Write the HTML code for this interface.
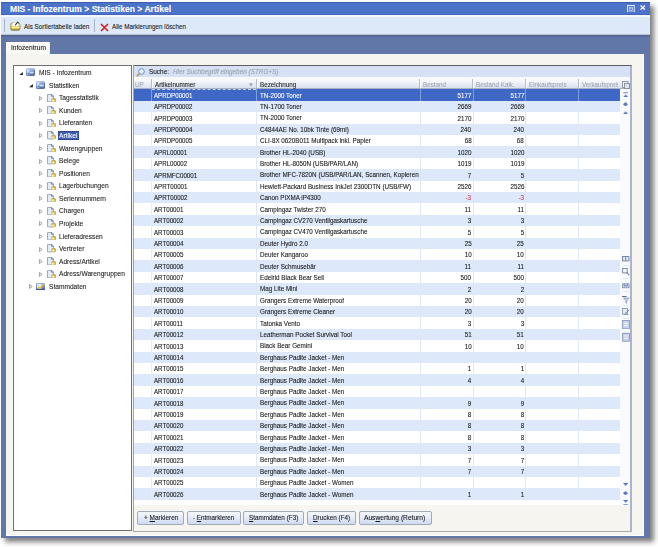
<!DOCTYPE html>
<html><head><meta charset="utf-8"><title>MIS - Infozentrum</title>
<style>
html,body{margin:0;padding:0;}
body{width:658px;height:547px;overflow:hidden;position:relative;background:#ffffff;font-family:"Liberation Sans", sans-serif;}
body div, body svg, .t{position:absolute;}
.t{white-space:nowrap;display:block;-webkit-text-stroke:0.1px currentColor;}
.clip{overflow:hidden;}
.btn{box-sizing:border-box;border:1px solid #a2aab8;border-radius:2px;background:linear-gradient(#f4f7fc 0%,#e6edf9 45%,#cddaf2 100%);font-size:7.8px;line-height:13.6px;color:#1a1a1a;text-align:center;white-space:nowrap;}
.btn span{display:inline-block;-webkit-text-stroke:0.15px currentColor;}
u{text-decoration-thickness:0.7px;text-underline-offset:0.9px;}
</style></head><body>
<div id="root" style="left:0;top:0;width:658px;height:547px;filter:blur(0.35px);">
<div style="left:1.2px;top:1.5px;width:648.80px;height:536.70px;background:#6077a8;box-shadow:4px 4px 5px rgba(0,0,0,0.5);"></div>
<div style="left:1.2px;top:1.5px;width:648.80px;height:13.80px;background:#4b73c9;border-top:1px solid #3b5cae;border-bottom:1px solid #4266b8;box-sizing:border-box;"></div>
<span class="t" style="left:10.20px;top:4.00px;font-size:9.0px;line-height:10px;color:#ffffff;font-weight:bold;font-style:normal;transform:scaleX(0.952);transform-origin:0 50%;">MIS - Infozentrum &gt; Statistiken &gt; Artikel</span>
<svg style="position:absolute;left:627.4px;top:4.5px" width="7.8" height="7.6" viewBox="0 0 7.8 7.6"><rect x="0.5" y="0.5" width="6.8" height="6.6" fill="none" stroke="#e4ecfa" stroke-width="1"/><rect x="2.3" y="2.3" width="3.2" height="3" fill="none" stroke="#c8d6f2" stroke-width="0.8"/><rect x="3.4" y="3.3" width="1" height="1" fill="#ffffff"/></svg>
<svg style="position:absolute;left:639.6px;top:5.4px" width="5.6" height="5.2" viewBox="0 0 5.6 5.2"><path d="M0.5 0.5L5.1 4.7M5.1 0.5L0.5 4.7" stroke="#ffffff" stroke-width="1.3"/></svg>
<div style="left:1.2px;top:15.3px;width:648.80px;height:1.70px;background:#f4f8fe;"></div>
<div style="left:1.2px;top:17.0px;width:648.80px;height:16.50px;background:#dde9f9;"></div>
<div style="left:1.2px;top:33.5px;width:648.80px;height:1.50px;background:#b9bec9;"></div>
<div style="left:1.2px;top:35.0px;width:648.80px;height:1.50px;background:#55699a;"></div>
<div style="left:3.5px;top:18.8px;width:1.00px;height:13.70px;background:#a9b3c4;"></div>
<div style="left:94.0px;top:18.8px;width:1.00px;height:13.20px;background:#a9b3c4;"></div>
<svg style="position:absolute;left:10.2px;top:21.2px" width="10.6" height="10" viewBox="0 0 10.6 10"><defs><linearGradient id="gy" x1="0" y1="0" x2="0" y2="1"><stop offset="0" stop-color="#e2dc90"/><stop offset="0.6" stop-color="#e8c850"/><stop offset="1" stop-color="#8a7a38"/></linearGradient></defs><rect x="0.4" y="1.6" width="9.8" height="8" rx="2.6" fill="url(#gy)" stroke="#8c8450" stroke-width="0.6"/><path d="M2.2 5.2L3 1.6H8.2L8.6 5.2z" fill="#ffffff"/><path d="M5.2 4.4L7.4 1.2L9 2.2" stroke="#3e4a50" stroke-width="1.1" fill="none"/><rect x="2" y="6" width="6.8" height="1.4" fill="#fbef9a"/></svg>
<span class="t" style="left:23.60px;top:21.90px;font-size:7.8px;line-height:10px;color:#161616;font-weight:normal;font-style:normal;transform:scaleX(0.814);transform-origin:0 50%;">Als Sortiertabelle laden</span>
<svg style="position:absolute;left:100px;top:23px" width="9" height="9" viewBox="0 0 9 9"><path d="M1 1L8 8M8 1L1 8" stroke="#d42020" stroke-width="1.6"/></svg>
<span class="t" style="left:112.20px;top:22.00px;font-size:7.8px;line-height:10px;color:#161616;font-weight:normal;font-style:normal;transform:scaleX(0.805);transform-origin:0 50%;">Alle Markierungen löschen</span>
<div style="left:5.7px;top:41.8px;width:44.00px;height:12.70px;background:#fafaf7;border-top:1px solid #ffffff;border-right:1px solid #e9ecf2;box-sizing:border-box;"></div>
<span class="t" style="left:11.00px;top:43.30px;font-size:7.8px;line-height:10px;color:#161616;font-weight:normal;font-style:normal;transform:scaleX(0.85);transform-origin:0 50%;">Infozentrum</span>
<div style="left:5.7px;top:53.7px;width:638.10px;height:482.00px;background:#f6f5ef;border-right:1.5px solid #ffffff;border-bottom:1.5px solid #ffffff;box-sizing:border-box;"></div>
<div style="left:12.5px;top:64.9px;width:119.20px;height:465.70px;background:#ffffff;border:1px solid #6f6f6f;box-sizing:border-box;"></div>
<svg style="position:absolute;left:18.8px;top:71.8px" width="4" height="3.2" viewBox="0 0 4 3.2"><path d="M3.9 0V3.2H0.1z" fill="#1e1e1e"/></svg>
<svg style="position:absolute;left:26.1px;top:68.4px" width="9" height="8.2" viewBox="0 0 9 8.2"><defs><linearGradient id="bl0" x1="0" y1="0" x2="0.2" y2="1"><stop offset="0" stop-color="#c0d2f2"/><stop offset="0.55" stop-color="#7c9ad8"/><stop offset="1" stop-color="#6078b0"/></linearGradient></defs><rect x="0" y="0.1" width="8.9" height="8" rx="1.4" fill="url(#bl0)"/><path d="M8.6 2.2v4.6" stroke="#40588c" stroke-width="0.8"/><rect x="1.1" y="1.3" width="2.2" height="5.2" fill="#eef3ff" opacity="0.75"/><rect x="1.6" y="4.8" width="1.4" height="1.2" fill="#404c66" opacity="0.7"/><rect x="4" y="3.8" width="3.6" height="1.5" fill="#e4f6ff" opacity="0.85"/><path d="M3.6 7.1h4.6" stroke="#586478" stroke-width="1" opacity="0.8"/></svg>
<span class="t" style="left:38.70px;top:68.20px;font-size:7.8px;line-height:10px;color:#1c1c1c;font-weight:normal;font-style:normal;transform:scaleX(0.848);transform-origin:0 50%;">MIS - Infozentrum</span>
<svg style="position:absolute;left:29.0px;top:84.4px" width="4" height="3.2" viewBox="0 0 4 3.2"><path d="M3.9 0V3.2H0.1z" fill="#1e1e1e"/></svg>
<svg style="position:absolute;left:36.2px;top:81.0px" width="9" height="8.2" viewBox="0 0 9 8.2"><defs><linearGradient id="bl1" x1="0" y1="0" x2="0.2" y2="1"><stop offset="0" stop-color="#c0d2f2"/><stop offset="0.55" stop-color="#7c9ad8"/><stop offset="1" stop-color="#6078b0"/></linearGradient></defs><rect x="0" y="0.1" width="8.9" height="8" rx="1.4" fill="url(#bl1)"/><path d="M8.6 2.2v4.6" stroke="#40588c" stroke-width="0.8"/><rect x="1.1" y="1.3" width="2.2" height="5.2" fill="#eef3ff" opacity="0.75"/><rect x="1.6" y="4.8" width="1.4" height="1.2" fill="#404c66" opacity="0.7"/><rect x="4" y="3.8" width="3.6" height="1.5" fill="#e4f6ff" opacity="0.85"/><path d="M3.6 7.1h4.6" stroke="#586478" stroke-width="1" opacity="0.8"/></svg>
<span class="t" style="left:48.85px;top:80.77px;font-size:7.8px;line-height:10px;color:#1c1c1c;font-weight:normal;font-style:normal;transform:scaleX(0.848);transform-origin:0 50%;">Statistiken</span>
<svg style="position:absolute;left:39.4px;top:95.7px" width="3.6" height="5" viewBox="0 0 3.6 5"><path d="M0.45 0.5L3.2 2.5L0.45 4.5z" fill="#ffffff" stroke="#8a8a8a" stroke-width="0.8"/></svg>
<svg style="position:absolute;left:47.1px;top:93.5px" width="9" height="8.4" viewBox="0 0 9 8.4"><defs><radialGradient id="yl2" cx="0.4" cy="0.6" r="0.7"><stop offset="0" stop-color="#fff8b8"/><stop offset="0.55" stop-color="#d8c060"/><stop offset="1" stop-color="#8a7424"/></radialGradient></defs><path d="M0.5 0.5h4.3l1.6 1.6v5.8h-5.9z" fill="#e4ecf8" stroke="#94a2be" stroke-width="0.9"/><path d="M4.6 0.4v1.8h1.9" fill="none" stroke="#5c6680" stroke-width="0.8"/><rect x="4.3" y="3.9" width="4.5" height="4.4" rx="1.6" fill="url(#yl2)"/></svg>
<span class="t" style="left:59.00px;top:93.34px;font-size:7.8px;line-height:10px;color:#1c1c1c;font-weight:normal;font-style:normal;transform:scaleX(0.848);transform-origin:0 50%;">Tagesstatistik</span>
<svg style="position:absolute;left:39.4px;top:108.3px" width="3.6" height="5" viewBox="0 0 3.6 5"><path d="M0.45 0.5L3.2 2.5L0.45 4.5z" fill="#ffffff" stroke="#8a8a8a" stroke-width="0.8"/></svg>
<svg style="position:absolute;left:47.1px;top:106.1px" width="9" height="8.4" viewBox="0 0 9 8.4"><defs><radialGradient id="yl3" cx="0.4" cy="0.6" r="0.7"><stop offset="0" stop-color="#fff8b8"/><stop offset="0.55" stop-color="#d8c060"/><stop offset="1" stop-color="#8a7424"/></radialGradient></defs><path d="M0.5 0.5h4.3l1.6 1.6v5.8h-5.9z" fill="#e4ecf8" stroke="#94a2be" stroke-width="0.9"/><path d="M4.6 0.4v1.8h1.9" fill="none" stroke="#5c6680" stroke-width="0.8"/><rect x="4.3" y="3.9" width="4.5" height="4.4" rx="1.6" fill="url(#yl3)"/></svg>
<span class="t" style="left:59.00px;top:105.91px;font-size:7.8px;line-height:10px;color:#1c1c1c;font-weight:normal;font-style:normal;transform:scaleX(0.848);transform-origin:0 50%;">Kunden</span>
<svg style="position:absolute;left:39.4px;top:120.9px" width="3.6" height="5" viewBox="0 0 3.6 5"><path d="M0.45 0.5L3.2 2.5L0.45 4.5z" fill="#ffffff" stroke="#8a8a8a" stroke-width="0.8"/></svg>
<svg style="position:absolute;left:47.1px;top:118.7px" width="9" height="8.4" viewBox="0 0 9 8.4"><defs><radialGradient id="yl4" cx="0.4" cy="0.6" r="0.7"><stop offset="0" stop-color="#fff8b8"/><stop offset="0.55" stop-color="#d8c060"/><stop offset="1" stop-color="#8a7424"/></radialGradient></defs><path d="M0.5 0.5h4.3l1.6 1.6v5.8h-5.9z" fill="#e4ecf8" stroke="#94a2be" stroke-width="0.9"/><path d="M4.6 0.4v1.8h1.9" fill="none" stroke="#5c6680" stroke-width="0.8"/><rect x="4.3" y="3.9" width="4.5" height="4.4" rx="1.6" fill="url(#yl4)"/></svg>
<span class="t" style="left:59.00px;top:118.48px;font-size:7.8px;line-height:10px;color:#1c1c1c;font-weight:normal;font-style:normal;transform:scaleX(0.848);transform-origin:0 50%;">Lieferanten</span>
<svg style="position:absolute;left:39.4px;top:133.4px" width="3.6" height="5" viewBox="0 0 3.6 5"><path d="M0.45 0.5L3.2 2.5L0.45 4.5z" fill="#ffffff" stroke="#8a8a8a" stroke-width="0.8"/></svg>
<svg style="position:absolute;left:47.1px;top:131.2px" width="9" height="8.4" viewBox="0 0 9 8.4"><defs><radialGradient id="yl5" cx="0.4" cy="0.6" r="0.7"><stop offset="0" stop-color="#fff8b8"/><stop offset="0.55" stop-color="#d8c060"/><stop offset="1" stop-color="#8a7424"/></radialGradient></defs><path d="M0.5 0.5h4.3l1.6 1.6v5.8h-5.9z" fill="#e4ecf8" stroke="#94a2be" stroke-width="0.9"/><path d="M4.6 0.4v1.8h1.9" fill="none" stroke="#5c6680" stroke-width="0.8"/><rect x="4.3" y="3.9" width="4.5" height="4.4" rx="1.6" fill="url(#yl5)"/></svg>
<div style="left:57.8px;top:131.3px;width:21.40px;height:9.20px;background:#3b5cb2;border:0.8px dotted #22367a;box-sizing:border-box;"></div>
<span class="t" style="left:59.30px;top:131.05px;font-size:7.8px;line-height:10px;color:#ffffff;font-weight:normal;font-style:normal;transform:scaleX(0.848);transform-origin:0 50%;">Artikel</span>
<svg style="position:absolute;left:39.4px;top:146.0px" width="3.6" height="5" viewBox="0 0 3.6 5"><path d="M0.45 0.5L3.2 2.5L0.45 4.5z" fill="#ffffff" stroke="#8a8a8a" stroke-width="0.8"/></svg>
<svg style="position:absolute;left:47.1px;top:143.8px" width="9" height="8.4" viewBox="0 0 9 8.4"><defs><radialGradient id="yl6" cx="0.4" cy="0.6" r="0.7"><stop offset="0" stop-color="#fff8b8"/><stop offset="0.55" stop-color="#d8c060"/><stop offset="1" stop-color="#8a7424"/></radialGradient></defs><path d="M0.5 0.5h4.3l1.6 1.6v5.8h-5.9z" fill="#e4ecf8" stroke="#94a2be" stroke-width="0.9"/><path d="M4.6 0.4v1.8h1.9" fill="none" stroke="#5c6680" stroke-width="0.8"/><rect x="4.3" y="3.9" width="4.5" height="4.4" rx="1.6" fill="url(#yl6)"/></svg>
<span class="t" style="left:59.00px;top:143.62px;font-size:7.8px;line-height:10px;color:#1c1c1c;font-weight:normal;font-style:normal;transform:scaleX(0.848);transform-origin:0 50%;">Warengruppen</span>
<svg style="position:absolute;left:39.4px;top:158.6px" width="3.6" height="5" viewBox="0 0 3.6 5"><path d="M0.45 0.5L3.2 2.5L0.45 4.5z" fill="#ffffff" stroke="#8a8a8a" stroke-width="0.8"/></svg>
<svg style="position:absolute;left:47.1px;top:156.4px" width="9" height="8.4" viewBox="0 0 9 8.4"><defs><radialGradient id="yl7" cx="0.4" cy="0.6" r="0.7"><stop offset="0" stop-color="#fff8b8"/><stop offset="0.55" stop-color="#d8c060"/><stop offset="1" stop-color="#8a7424"/></radialGradient></defs><path d="M0.5 0.5h4.3l1.6 1.6v5.8h-5.9z" fill="#e4ecf8" stroke="#94a2be" stroke-width="0.9"/><path d="M4.6 0.4v1.8h1.9" fill="none" stroke="#5c6680" stroke-width="0.8"/><rect x="4.3" y="3.9" width="4.5" height="4.4" rx="1.6" fill="url(#yl7)"/></svg>
<span class="t" style="left:59.00px;top:156.19px;font-size:7.8px;line-height:10px;color:#1c1c1c;font-weight:normal;font-style:normal;transform:scaleX(0.848);transform-origin:0 50%;">Belege</span>
<svg style="position:absolute;left:39.4px;top:171.2px" width="3.6" height="5" viewBox="0 0 3.6 5"><path d="M0.45 0.5L3.2 2.5L0.45 4.5z" fill="#ffffff" stroke="#8a8a8a" stroke-width="0.8"/></svg>
<svg style="position:absolute;left:47.1px;top:169.0px" width="9" height="8.4" viewBox="0 0 9 8.4"><defs><radialGradient id="yl8" cx="0.4" cy="0.6" r="0.7"><stop offset="0" stop-color="#fff8b8"/><stop offset="0.55" stop-color="#d8c060"/><stop offset="1" stop-color="#8a7424"/></radialGradient></defs><path d="M0.5 0.5h4.3l1.6 1.6v5.8h-5.9z" fill="#e4ecf8" stroke="#94a2be" stroke-width="0.9"/><path d="M4.6 0.4v1.8h1.9" fill="none" stroke="#5c6680" stroke-width="0.8"/><rect x="4.3" y="3.9" width="4.5" height="4.4" rx="1.6" fill="url(#yl8)"/></svg>
<span class="t" style="left:59.00px;top:168.76px;font-size:7.8px;line-height:10px;color:#1c1c1c;font-weight:normal;font-style:normal;transform:scaleX(0.848);transform-origin:0 50%;">Positionen</span>
<svg style="position:absolute;left:39.4px;top:183.7px" width="3.6" height="5" viewBox="0 0 3.6 5"><path d="M0.45 0.5L3.2 2.5L0.45 4.5z" fill="#ffffff" stroke="#8a8a8a" stroke-width="0.8"/></svg>
<svg style="position:absolute;left:47.1px;top:181.5px" width="9" height="8.4" viewBox="0 0 9 8.4"><defs><radialGradient id="yl9" cx="0.4" cy="0.6" r="0.7"><stop offset="0" stop-color="#fff8b8"/><stop offset="0.55" stop-color="#d8c060"/><stop offset="1" stop-color="#8a7424"/></radialGradient></defs><path d="M0.5 0.5h4.3l1.6 1.6v5.8h-5.9z" fill="#e4ecf8" stroke="#94a2be" stroke-width="0.9"/><path d="M4.6 0.4v1.8h1.9" fill="none" stroke="#5c6680" stroke-width="0.8"/><rect x="4.3" y="3.9" width="4.5" height="4.4" rx="1.6" fill="url(#yl9)"/></svg>
<span class="t" style="left:59.00px;top:181.33px;font-size:7.8px;line-height:10px;color:#1c1c1c;font-weight:normal;font-style:normal;transform:scaleX(0.848);transform-origin:0 50%;">Lagerbuchungen</span>
<svg style="position:absolute;left:39.4px;top:196.3px" width="3.6" height="5" viewBox="0 0 3.6 5"><path d="M0.45 0.5L3.2 2.5L0.45 4.5z" fill="#ffffff" stroke="#8a8a8a" stroke-width="0.8"/></svg>
<svg style="position:absolute;left:47.1px;top:194.1px" width="9" height="8.4" viewBox="0 0 9 8.4"><defs><radialGradient id="yl10" cx="0.4" cy="0.6" r="0.7"><stop offset="0" stop-color="#fff8b8"/><stop offset="0.55" stop-color="#d8c060"/><stop offset="1" stop-color="#8a7424"/></radialGradient></defs><path d="M0.5 0.5h4.3l1.6 1.6v5.8h-5.9z" fill="#e4ecf8" stroke="#94a2be" stroke-width="0.9"/><path d="M4.6 0.4v1.8h1.9" fill="none" stroke="#5c6680" stroke-width="0.8"/><rect x="4.3" y="3.9" width="4.5" height="4.4" rx="1.6" fill="url(#yl10)"/></svg>
<span class="t" style="left:59.00px;top:193.90px;font-size:7.8px;line-height:10px;color:#1c1c1c;font-weight:normal;font-style:normal;transform:scaleX(0.848);transform-origin:0 50%;">Seriennummern</span>
<svg style="position:absolute;left:39.4px;top:208.9px" width="3.6" height="5" viewBox="0 0 3.6 5"><path d="M0.45 0.5L3.2 2.5L0.45 4.5z" fill="#ffffff" stroke="#8a8a8a" stroke-width="0.8"/></svg>
<svg style="position:absolute;left:47.1px;top:206.7px" width="9" height="8.4" viewBox="0 0 9 8.4"><defs><radialGradient id="yl11" cx="0.4" cy="0.6" r="0.7"><stop offset="0" stop-color="#fff8b8"/><stop offset="0.55" stop-color="#d8c060"/><stop offset="1" stop-color="#8a7424"/></radialGradient></defs><path d="M0.5 0.5h4.3l1.6 1.6v5.8h-5.9z" fill="#e4ecf8" stroke="#94a2be" stroke-width="0.9"/><path d="M4.6 0.4v1.8h1.9" fill="none" stroke="#5c6680" stroke-width="0.8"/><rect x="4.3" y="3.9" width="4.5" height="4.4" rx="1.6" fill="url(#yl11)"/></svg>
<span class="t" style="left:59.00px;top:206.47px;font-size:7.8px;line-height:10px;color:#1c1c1c;font-weight:normal;font-style:normal;transform:scaleX(0.848);transform-origin:0 50%;">Chargen</span>
<svg style="position:absolute;left:39.4px;top:221.4px" width="3.6" height="5" viewBox="0 0 3.6 5"><path d="M0.45 0.5L3.2 2.5L0.45 4.5z" fill="#ffffff" stroke="#8a8a8a" stroke-width="0.8"/></svg>
<svg style="position:absolute;left:47.1px;top:219.2px" width="9" height="8.4" viewBox="0 0 9 8.4"><defs><radialGradient id="yl12" cx="0.4" cy="0.6" r="0.7"><stop offset="0" stop-color="#fff8b8"/><stop offset="0.55" stop-color="#d8c060"/><stop offset="1" stop-color="#8a7424"/></radialGradient></defs><path d="M0.5 0.5h4.3l1.6 1.6v5.8h-5.9z" fill="#e4ecf8" stroke="#94a2be" stroke-width="0.9"/><path d="M4.6 0.4v1.8h1.9" fill="none" stroke="#5c6680" stroke-width="0.8"/><rect x="4.3" y="3.9" width="4.5" height="4.4" rx="1.6" fill="url(#yl12)"/></svg>
<span class="t" style="left:59.00px;top:219.04px;font-size:7.8px;line-height:10px;color:#1c1c1c;font-weight:normal;font-style:normal;transform:scaleX(0.848);transform-origin:0 50%;">Projekte</span>
<svg style="position:absolute;left:39.4px;top:234.0px" width="3.6" height="5" viewBox="0 0 3.6 5"><path d="M0.45 0.5L3.2 2.5L0.45 4.5z" fill="#ffffff" stroke="#8a8a8a" stroke-width="0.8"/></svg>
<svg style="position:absolute;left:47.1px;top:231.8px" width="9" height="8.4" viewBox="0 0 9 8.4"><defs><radialGradient id="yl13" cx="0.4" cy="0.6" r="0.7"><stop offset="0" stop-color="#fff8b8"/><stop offset="0.55" stop-color="#d8c060"/><stop offset="1" stop-color="#8a7424"/></radialGradient></defs><path d="M0.5 0.5h4.3l1.6 1.6v5.8h-5.9z" fill="#e4ecf8" stroke="#94a2be" stroke-width="0.9"/><path d="M4.6 0.4v1.8h1.9" fill="none" stroke="#5c6680" stroke-width="0.8"/><rect x="4.3" y="3.9" width="4.5" height="4.4" rx="1.6" fill="url(#yl13)"/></svg>
<span class="t" style="left:59.00px;top:231.61px;font-size:7.8px;line-height:10px;color:#1c1c1c;font-weight:normal;font-style:normal;transform:scaleX(0.848);transform-origin:0 50%;">Lieferadressen</span>
<svg style="position:absolute;left:39.4px;top:246.6px" width="3.6" height="5" viewBox="0 0 3.6 5"><path d="M0.45 0.5L3.2 2.5L0.45 4.5z" fill="#ffffff" stroke="#8a8a8a" stroke-width="0.8"/></svg>
<svg style="position:absolute;left:47.1px;top:244.4px" width="9" height="8.4" viewBox="0 0 9 8.4"><defs><radialGradient id="yl14" cx="0.4" cy="0.6" r="0.7"><stop offset="0" stop-color="#fff8b8"/><stop offset="0.55" stop-color="#d8c060"/><stop offset="1" stop-color="#8a7424"/></radialGradient></defs><path d="M0.5 0.5h4.3l1.6 1.6v5.8h-5.9z" fill="#e4ecf8" stroke="#94a2be" stroke-width="0.9"/><path d="M4.6 0.4v1.8h1.9" fill="none" stroke="#5c6680" stroke-width="0.8"/><rect x="4.3" y="3.9" width="4.5" height="4.4" rx="1.6" fill="url(#yl14)"/></svg>
<span class="t" style="left:59.00px;top:244.18px;font-size:7.8px;line-height:10px;color:#1c1c1c;font-weight:normal;font-style:normal;transform:scaleX(0.848);transform-origin:0 50%;">Vertreter</span>
<svg style="position:absolute;left:39.4px;top:259.2px" width="3.6" height="5" viewBox="0 0 3.6 5"><path d="M0.45 0.5L3.2 2.5L0.45 4.5z" fill="#ffffff" stroke="#8a8a8a" stroke-width="0.8"/></svg>
<svg style="position:absolute;left:47.1px;top:256.9px" width="9" height="8.4" viewBox="0 0 9 8.4"><defs><radialGradient id="yl15" cx="0.4" cy="0.6" r="0.7"><stop offset="0" stop-color="#fff8b8"/><stop offset="0.55" stop-color="#d8c060"/><stop offset="1" stop-color="#8a7424"/></radialGradient></defs><path d="M0.5 0.5h4.3l1.6 1.6v5.8h-5.9z" fill="#e4ecf8" stroke="#94a2be" stroke-width="0.9"/><path d="M4.6 0.4v1.8h1.9" fill="none" stroke="#5c6680" stroke-width="0.8"/><rect x="4.3" y="3.9" width="4.5" height="4.4" rx="1.6" fill="url(#yl15)"/></svg>
<span class="t" style="left:59.00px;top:256.75px;font-size:7.8px;line-height:10px;color:#1c1c1c;font-weight:normal;font-style:normal;transform:scaleX(0.848);transform-origin:0 50%;">Adress/Artikel</span>
<svg style="position:absolute;left:39.4px;top:271.7px" width="3.6" height="5" viewBox="0 0 3.6 5"><path d="M0.45 0.5L3.2 2.5L0.45 4.5z" fill="#ffffff" stroke="#8a8a8a" stroke-width="0.8"/></svg>
<svg style="position:absolute;left:47.1px;top:269.5px" width="9" height="8.4" viewBox="0 0 9 8.4"><defs><radialGradient id="yl16" cx="0.4" cy="0.6" r="0.7"><stop offset="0" stop-color="#fff8b8"/><stop offset="0.55" stop-color="#d8c060"/><stop offset="1" stop-color="#8a7424"/></radialGradient></defs><path d="M0.5 0.5h4.3l1.6 1.6v5.8h-5.9z" fill="#e4ecf8" stroke="#94a2be" stroke-width="0.9"/><path d="M4.6 0.4v1.8h1.9" fill="none" stroke="#5c6680" stroke-width="0.8"/><rect x="4.3" y="3.9" width="4.5" height="4.4" rx="1.6" fill="url(#yl16)"/></svg>
<span class="t" style="left:59.00px;top:269.32px;font-size:7.8px;line-height:10px;color:#1c1c1c;font-weight:normal;font-style:normal;transform:scaleX(0.848);transform-origin:0 50%;">Adress/Warengruppen</span>
<svg style="position:absolute;left:29.3px;top:284.3px" width="3.6" height="5" viewBox="0 0 3.6 5"><path d="M0.45 0.5L3.2 2.5L0.45 4.5z" fill="#ffffff" stroke="#8a8a8a" stroke-width="0.8"/></svg>
<svg style="position:absolute;left:36.0px;top:282.6px" width="9" height="7.4" viewBox="0 0 9 7.4"><defs><linearGradient id="st17" x1="0" y1="0" x2="0" y2="1"><stop offset="0" stop-color="#9ab8ee"/><stop offset="1" stop-color="#3e5ea8"/></linearGradient></defs><rect x="0" y="0" width="9" height="7.4" rx="1" fill="url(#st17)"/><rect x="1" y="1" width="4.6" height="4.6" fill="#eef3fc" opacity="0.9"/><path d="M2.2 3.6L4 5.6L8.2 1" stroke="#e8b820" stroke-width="1.4" fill="none"/><path d="M0.5 6.9h8" stroke="#2c3e6a" stroke-width="0.8"/></svg>
<span class="t" style="left:48.85px;top:281.89px;font-size:7.8px;line-height:10px;color:#1c1c1c;font-weight:normal;font-style:normal;transform:scaleX(0.848);transform-origin:0 50%;">Stammdaten</span>
<div style="left:132.6px;top:64.9px;width:499.30px;height:467.60px;background:#ffffff;border-left:1.4px solid #a3a3a3;border-right:1.4px solid #a8b4d0;border-bottom:1.2px solid #a8a8a8;border-top:1.2px solid #5e5e5e;box-sizing:border-box;"></div>
<div style="left:134px;top:66.1px;width:496.50px;height:11.30px;background:#d6e1f5;"></div>
<svg style="position:absolute;left:136px;top:67.5px" width="9" height="9" viewBox="0 0 9 9"><circle cx="5.5" cy="3.5" r="2.8" fill="#e9f2fb" stroke="#5d8fc8" stroke-width="1"/><path d="M3.5 5.5L0.8 8.2" stroke="#c98a3a" stroke-width="1.6"/></svg>
<span class="t" style="left:148.80px;top:67.20px;font-size:7.8px;line-height:10px;color:#161616;font-weight:normal;font-style:normal;transform:scaleX(0.823);transform-origin:0 50%;">Suche:</span>
<span class="t" style="left:173.10px;top:67.20px;font-size:7.8px;line-height:10px;color:#9aa0aa;font-weight:normal;font-style:italic;transform:scaleX(0.818);transform-origin:0 50%;">Hier Suchbegriff eingeben (STRG+S)</span>
<div style="left:134px;top:77.4px;width:496.50px;height:11.90px;background:linear-gradient(#fbfcfe 0%,#f3f6fb 40%,#d9e1ef 100%);border-bottom:1px solid #a9b1c2;box-sizing:border-box;"></div>
<div style="left:150.79999999999998px;top:78.5px;width:1.00px;height:9.80px;background:#b4bccb;"></div>
<div style="left:151.79999999999998px;top:78.5px;width:0.80px;height:9.80px;background:#ffffff;"></div>
<div style="left:256.09999999999997px;top:78.5px;width:1.00px;height:9.80px;background:#b4bccb;"></div>
<div style="left:257.09999999999997px;top:78.5px;width:0.80px;height:9.80px;background:#ffffff;"></div>
<div style="left:419.2px;top:78.5px;width:1.00px;height:9.80px;background:#b4bccb;"></div>
<div style="left:420.2px;top:78.5px;width:0.80px;height:9.80px;background:#ffffff;"></div>
<div style="left:472.2px;top:78.5px;width:1.00px;height:9.80px;background:#b4bccb;"></div>
<div style="left:473.2px;top:78.5px;width:0.80px;height:9.80px;background:#ffffff;"></div>
<div style="left:525.0px;top:78.5px;width:1.00px;height:9.80px;background:#b4bccb;"></div>
<div style="left:526.0px;top:78.5px;width:0.80px;height:9.80px;background:#ffffff;"></div>
<div style="left:578.0px;top:78.5px;width:1.00px;height:9.80px;background:#b4bccb;"></div>
<div style="left:579.0px;top:78.5px;width:0.80px;height:9.80px;background:#ffffff;"></div>
<span class="t" style="left:135.40px;top:79.60px;font-size:7.8px;line-height:10px;color:#a0a6b2;font-weight:normal;font-style:normal;transform:scaleX(0.804);transform-origin:0 50%;">UP</span>
<span class="t" style="left:155.40px;top:79.60px;font-size:7.8px;line-height:10px;color:#1a1a1a;font-weight:normal;font-style:normal;transform:scaleX(0.804);transform-origin:0 50%;">Artikelnummer</span>
<span class="t" style="left:260.30px;top:79.60px;font-size:7.8px;line-height:10px;color:#1a1a1a;font-weight:normal;font-style:normal;transform:scaleX(0.804);transform-origin:0 50%;">Bezeichnung</span>
<span class="t" style="left:423.40px;top:79.60px;font-size:7.8px;line-height:10px;color:#a0a6b2;font-weight:normal;font-style:normal;transform:scaleX(0.804);transform-origin:0 50%;">Bestand</span>
<span class="t" style="left:476.40px;top:79.60px;font-size:7.8px;line-height:10px;color:#a0a6b2;font-weight:normal;font-style:normal;transform:scaleX(0.804);transform-origin:0 50%;">Bestand Kalk.</span>
<span class="t" style="left:529.20px;top:79.60px;font-size:7.8px;line-height:10px;color:#a0a6b2;font-weight:normal;font-style:normal;transform:scaleX(0.804);transform-origin:0 50%;">Einkaufspreis</span>
<div class="clip" style="left:579px;top:78px;width:39px;height:10px">
<span class="t" style="left:3.20px;top:1.60px;font-size:7.8px;line-height:10px;color:#a0a6b2;font-weight:normal;font-style:normal;transform:scaleX(0.804);transform-origin:0 50%;">Verkaufspreis</span>
</div>
<svg style="position:absolute;left:249.3px;top:83.2px" width="4" height="4" viewBox="0 0 4 4"><path d="M0 0.3H4L2 3.7z" fill="#a0a8b8"/></svg>
<svg style="position:absolute;left:621.5px;top:80.5px" width="8" height="8" viewBox="0 0 8 8"><rect x="0.5" y="0.5" width="5.5" height="6" fill="#f4f6fa" stroke="#7a8290" stroke-width="0.8"/><rect x="2.5" y="2.5" width="5" height="5" fill="#dfe5ef" stroke="#7a8290" stroke-width="0.8"/></svg>
<div style="left:134px;top:89.4px;width:486.40px;height:11.40px;background:#3e67c6;"></div>
<span class="t" style="left:154.00px;top:90.70px;font-size:7.8px;line-height:10px;color:#ffffff;font-weight:normal;font-style:normal;transform:scaleX(0.79);transform-origin:0 50%;">APRDP00001</span>
<div class="clip" style="left:257px;top:89.40px;width:162.5px;height:11.4px">
<span class="t" style="left:2.60px;top:1.30px;font-size:7.8px;line-height:10px;color:#ffffff;font-weight:normal;font-style:normal;transform:scaleX(0.807);transform-origin:0 50%;">TN-2000 Toner</span>
</div>
<span class="t" style="right:186.70px;top:90.70px;font-size:7.8px;line-height:10px;color:#ffffff;font-weight:normal;font-style:normal;transform:scaleX(0.8);transform-origin:100% 50%;">5177</span>
<span class="t" style="right:134.10px;top:90.70px;font-size:7.8px;line-height:10px;color:#ffffff;font-weight:normal;font-style:normal;transform:scaleX(0.8);transform-origin:100% 50%;">5177</span>
<div style="left:134px;top:100.80000000000001px;width:486.40px;height:11.40px;background:#dde8fb;"></div>
<span class="t" style="left:154.00px;top:102.10px;font-size:7.8px;line-height:10px;color:#161616;font-weight:normal;font-style:normal;transform:scaleX(0.79);transform-origin:0 50%;">APRDP00002</span>
<div class="clip" style="left:257px;top:100.80px;width:162.5px;height:11.4px">
<span class="t" style="left:2.60px;top:1.30px;font-size:7.8px;line-height:10px;color:#161616;font-weight:normal;font-style:normal;transform:scaleX(0.807);transform-origin:0 50%;">TN-1700 Toner</span>
</div>
<span class="t" style="right:186.70px;top:102.10px;font-size:7.8px;line-height:10px;color:#161616;font-weight:normal;font-style:normal;transform:scaleX(0.8);transform-origin:100% 50%;">2669</span>
<span class="t" style="right:134.10px;top:102.10px;font-size:7.8px;line-height:10px;color:#161616;font-weight:normal;font-style:normal;transform:scaleX(0.8);transform-origin:100% 50%;">2669</span>
<span class="t" style="left:154.00px;top:113.50px;font-size:7.8px;line-height:10px;color:#161616;font-weight:normal;font-style:normal;transform:scaleX(0.79);transform-origin:0 50%;">APRDP00003</span>
<div class="clip" style="left:257px;top:112.20px;width:162.5px;height:11.4px">
<span class="t" style="left:2.60px;top:1.30px;font-size:7.8px;line-height:10px;color:#161616;font-weight:normal;font-style:normal;transform:scaleX(0.807);transform-origin:0 50%;">TN-2000 Toner</span>
</div>
<span class="t" style="right:186.70px;top:113.50px;font-size:7.8px;line-height:10px;color:#161616;font-weight:normal;font-style:normal;transform:scaleX(0.8);transform-origin:100% 50%;">2170</span>
<span class="t" style="right:134.10px;top:113.50px;font-size:7.8px;line-height:10px;color:#161616;font-weight:normal;font-style:normal;transform:scaleX(0.8);transform-origin:100% 50%;">2170</span>
<div style="left:134px;top:123.60000000000001px;width:486.40px;height:11.40px;background:#dde8fb;"></div>
<span class="t" style="left:154.00px;top:124.90px;font-size:7.8px;line-height:10px;color:#161616;font-weight:normal;font-style:normal;transform:scaleX(0.79);transform-origin:0 50%;">APRDP00004</span>
<div class="clip" style="left:257px;top:123.60px;width:162.5px;height:11.4px">
<span class="t" style="left:2.60px;top:1.30px;font-size:7.8px;line-height:10px;color:#161616;font-weight:normal;font-style:normal;transform:scaleX(0.807);transform-origin:0 50%;">C4844AE No. 10bk Tinte (69ml)</span>
</div>
<span class="t" style="right:186.70px;top:124.90px;font-size:7.8px;line-height:10px;color:#161616;font-weight:normal;font-style:normal;transform:scaleX(0.8);transform-origin:100% 50%;">240</span>
<span class="t" style="right:134.10px;top:124.90px;font-size:7.8px;line-height:10px;color:#161616;font-weight:normal;font-style:normal;transform:scaleX(0.8);transform-origin:100% 50%;">240</span>
<span class="t" style="left:154.00px;top:136.30px;font-size:7.8px;line-height:10px;color:#161616;font-weight:normal;font-style:normal;transform:scaleX(0.79);transform-origin:0 50%;">APRDP00005</span>
<div class="clip" style="left:257px;top:135.00px;width:162.5px;height:11.4px">
<span class="t" style="left:2.60px;top:1.30px;font-size:7.8px;line-height:10px;color:#161616;font-weight:normal;font-style:normal;transform:scaleX(0.807);transform-origin:0 50%;">CLI-8X 0620B011 Multipack inkl. Papier</span>
</div>
<span class="t" style="right:186.70px;top:136.30px;font-size:7.8px;line-height:10px;color:#161616;font-weight:normal;font-style:normal;transform:scaleX(0.8);transform-origin:100% 50%;">68</span>
<span class="t" style="right:134.10px;top:136.30px;font-size:7.8px;line-height:10px;color:#161616;font-weight:normal;font-style:normal;transform:scaleX(0.8);transform-origin:100% 50%;">68</span>
<div style="left:134px;top:146.4px;width:486.40px;height:11.40px;background:#dde8fb;"></div>
<span class="t" style="left:154.00px;top:147.70px;font-size:7.8px;line-height:10px;color:#161616;font-weight:normal;font-style:normal;transform:scaleX(0.79);transform-origin:0 50%;">APRL00001</span>
<div class="clip" style="left:257px;top:146.40px;width:162.5px;height:11.4px">
<span class="t" style="left:2.60px;top:1.30px;font-size:7.8px;line-height:10px;color:#161616;font-weight:normal;font-style:normal;transform:scaleX(0.807);transform-origin:0 50%;">Brother HL-2040 (USB)</span>
</div>
<span class="t" style="right:186.70px;top:147.70px;font-size:7.8px;line-height:10px;color:#161616;font-weight:normal;font-style:normal;transform:scaleX(0.8);transform-origin:100% 50%;">1020</span>
<span class="t" style="right:134.10px;top:147.70px;font-size:7.8px;line-height:10px;color:#161616;font-weight:normal;font-style:normal;transform:scaleX(0.8);transform-origin:100% 50%;">1020</span>
<span class="t" style="left:154.00px;top:159.10px;font-size:7.8px;line-height:10px;color:#161616;font-weight:normal;font-style:normal;transform:scaleX(0.79);transform-origin:0 50%;">APRL00002</span>
<div class="clip" style="left:257px;top:157.80px;width:162.5px;height:11.4px">
<span class="t" style="left:2.60px;top:1.30px;font-size:7.8px;line-height:10px;color:#161616;font-weight:normal;font-style:normal;transform:scaleX(0.807);transform-origin:0 50%;">Brother HL-8050N (USB/PAR/LAN)</span>
</div>
<span class="t" style="right:186.70px;top:159.10px;font-size:7.8px;line-height:10px;color:#161616;font-weight:normal;font-style:normal;transform:scaleX(0.8);transform-origin:100% 50%;">1019</span>
<span class="t" style="right:134.10px;top:159.10px;font-size:7.8px;line-height:10px;color:#161616;font-weight:normal;font-style:normal;transform:scaleX(0.8);transform-origin:100% 50%;">1019</span>
<div style="left:134px;top:169.2px;width:486.40px;height:11.40px;background:#dde8fb;"></div>
<span class="t" style="left:154.00px;top:170.50px;font-size:7.8px;line-height:10px;color:#161616;font-weight:normal;font-style:normal;transform:scaleX(0.79);transform-origin:0 50%;">APRMFC00001</span>
<div class="clip" style="left:257px;top:169.20px;width:162.5px;height:11.4px">
<span class="t" style="left:2.60px;top:1.30px;font-size:7.8px;line-height:10px;color:#161616;font-weight:normal;font-style:normal;transform:scaleX(0.807);transform-origin:0 50%;">Brother MFC-7820N (USB/PAR/LAN, Scannen, Kopieren</span>
</div>
<span class="t" style="right:186.70px;top:170.50px;font-size:7.8px;line-height:10px;color:#161616;font-weight:normal;font-style:normal;transform:scaleX(0.8);transform-origin:100% 50%;">7</span>
<span class="t" style="right:134.10px;top:170.50px;font-size:7.8px;line-height:10px;color:#161616;font-weight:normal;font-style:normal;transform:scaleX(0.8);transform-origin:100% 50%;">5</span>
<span class="t" style="left:154.00px;top:181.90px;font-size:7.8px;line-height:10px;color:#161616;font-weight:normal;font-style:normal;transform:scaleX(0.79);transform-origin:0 50%;">APRT00001</span>
<div class="clip" style="left:257px;top:180.60px;width:162.5px;height:11.4px">
<span class="t" style="left:2.60px;top:1.30px;font-size:7.8px;line-height:10px;color:#161616;font-weight:normal;font-style:normal;transform:scaleX(0.807);transform-origin:0 50%;">Hewlett-Packard Business InkJet 2300DTN (USB/FW)</span>
</div>
<span class="t" style="right:186.70px;top:181.90px;font-size:7.8px;line-height:10px;color:#161616;font-weight:normal;font-style:normal;transform:scaleX(0.8);transform-origin:100% 50%;">2526</span>
<span class="t" style="right:134.10px;top:181.90px;font-size:7.8px;line-height:10px;color:#161616;font-weight:normal;font-style:normal;transform:scaleX(0.8);transform-origin:100% 50%;">2526</span>
<div style="left:134px;top:192.0px;width:486.40px;height:11.40px;background:#dde8fb;"></div>
<span class="t" style="left:154.00px;top:193.30px;font-size:7.8px;line-height:10px;color:#161616;font-weight:normal;font-style:normal;transform:scaleX(0.79);transform-origin:0 50%;">APRT00002</span>
<div class="clip" style="left:257px;top:192.00px;width:162.5px;height:11.4px">
<span class="t" style="left:2.60px;top:1.30px;font-size:7.8px;line-height:10px;color:#161616;font-weight:normal;font-style:normal;transform:scaleX(0.807);transform-origin:0 50%;">Canon PIXMA iP4300</span>
</div>
<span class="t" style="right:186.70px;top:193.30px;font-size:7.8px;line-height:10px;color:#e0405a;font-weight:normal;font-style:normal;transform:scaleX(0.8);transform-origin:100% 50%;">-3</span>
<span class="t" style="right:134.10px;top:193.30px;font-size:7.8px;line-height:10px;color:#e0405a;font-weight:normal;font-style:normal;transform:scaleX(0.8);transform-origin:100% 50%;">-3</span>
<span class="t" style="left:154.00px;top:204.70px;font-size:7.8px;line-height:10px;color:#161616;font-weight:normal;font-style:normal;transform:scaleX(0.79);transform-origin:0 50%;">ART00001</span>
<div class="clip" style="left:257px;top:203.40px;width:162.5px;height:11.4px">
<span class="t" style="left:2.60px;top:1.30px;font-size:7.8px;line-height:10px;color:#161616;font-weight:normal;font-style:normal;transform:scaleX(0.807);transform-origin:0 50%;">Campingaz Twister 270</span>
</div>
<span class="t" style="right:186.70px;top:204.70px;font-size:7.8px;line-height:10px;color:#161616;font-weight:normal;font-style:normal;transform:scaleX(0.8);transform-origin:100% 50%;">11</span>
<span class="t" style="right:134.10px;top:204.70px;font-size:7.8px;line-height:10px;color:#161616;font-weight:normal;font-style:normal;transform:scaleX(0.8);transform-origin:100% 50%;">11</span>
<div style="left:134px;top:214.8px;width:486.40px;height:11.40px;background:#dde8fb;"></div>
<span class="t" style="left:154.00px;top:216.10px;font-size:7.8px;line-height:10px;color:#161616;font-weight:normal;font-style:normal;transform:scaleX(0.79);transform-origin:0 50%;">ART00002</span>
<div class="clip" style="left:257px;top:214.80px;width:162.5px;height:11.4px">
<span class="t" style="left:2.60px;top:1.30px;font-size:7.8px;line-height:10px;color:#161616;font-weight:normal;font-style:normal;transform:scaleX(0.807);transform-origin:0 50%;">Campingaz CV270 Ventilgaskartusche</span>
</div>
<span class="t" style="right:186.70px;top:216.10px;font-size:7.8px;line-height:10px;color:#161616;font-weight:normal;font-style:normal;transform:scaleX(0.8);transform-origin:100% 50%;">3</span>
<span class="t" style="right:134.10px;top:216.10px;font-size:7.8px;line-height:10px;color:#161616;font-weight:normal;font-style:normal;transform:scaleX(0.8);transform-origin:100% 50%;">3</span>
<span class="t" style="left:154.00px;top:227.50px;font-size:7.8px;line-height:10px;color:#161616;font-weight:normal;font-style:normal;transform:scaleX(0.79);transform-origin:0 50%;">ART00003</span>
<div class="clip" style="left:257px;top:226.20px;width:162.5px;height:11.4px">
<span class="t" style="left:2.60px;top:1.30px;font-size:7.8px;line-height:10px;color:#161616;font-weight:normal;font-style:normal;transform:scaleX(0.807);transform-origin:0 50%;">Campingaz CV470 Ventilgaskartusche</span>
</div>
<span class="t" style="right:186.70px;top:227.50px;font-size:7.8px;line-height:10px;color:#161616;font-weight:normal;font-style:normal;transform:scaleX(0.8);transform-origin:100% 50%;">5</span>
<span class="t" style="right:134.10px;top:227.50px;font-size:7.8px;line-height:10px;color:#161616;font-weight:normal;font-style:normal;transform:scaleX(0.8);transform-origin:100% 50%;">5</span>
<div style="left:134px;top:237.60000000000002px;width:486.40px;height:11.40px;background:#dde8fb;"></div>
<span class="t" style="left:154.00px;top:238.90px;font-size:7.8px;line-height:10px;color:#161616;font-weight:normal;font-style:normal;transform:scaleX(0.79);transform-origin:0 50%;">ART00004</span>
<div class="clip" style="left:257px;top:237.60px;width:162.5px;height:11.4px">
<span class="t" style="left:2.60px;top:1.30px;font-size:7.8px;line-height:10px;color:#161616;font-weight:normal;font-style:normal;transform:scaleX(0.807);transform-origin:0 50%;">Deuter Hydro 2.0</span>
</div>
<span class="t" style="right:186.70px;top:238.90px;font-size:7.8px;line-height:10px;color:#161616;font-weight:normal;font-style:normal;transform:scaleX(0.8);transform-origin:100% 50%;">25</span>
<span class="t" style="right:134.10px;top:238.90px;font-size:7.8px;line-height:10px;color:#161616;font-weight:normal;font-style:normal;transform:scaleX(0.8);transform-origin:100% 50%;">25</span>
<span class="t" style="left:154.00px;top:250.30px;font-size:7.8px;line-height:10px;color:#161616;font-weight:normal;font-style:normal;transform:scaleX(0.79);transform-origin:0 50%;">ART00005</span>
<div class="clip" style="left:257px;top:249.00px;width:162.5px;height:11.4px">
<span class="t" style="left:2.60px;top:1.30px;font-size:7.8px;line-height:10px;color:#161616;font-weight:normal;font-style:normal;transform:scaleX(0.807);transform-origin:0 50%;">Deuter Kangaroo</span>
</div>
<span class="t" style="right:186.70px;top:250.30px;font-size:7.8px;line-height:10px;color:#161616;font-weight:normal;font-style:normal;transform:scaleX(0.8);transform-origin:100% 50%;">10</span>
<span class="t" style="right:134.10px;top:250.30px;font-size:7.8px;line-height:10px;color:#161616;font-weight:normal;font-style:normal;transform:scaleX(0.8);transform-origin:100% 50%;">10</span>
<div style="left:134px;top:260.4px;width:486.40px;height:11.40px;background:#dde8fb;"></div>
<span class="t" style="left:154.00px;top:261.70px;font-size:7.8px;line-height:10px;color:#161616;font-weight:normal;font-style:normal;transform:scaleX(0.79);transform-origin:0 50%;">ART00006</span>
<div class="clip" style="left:257px;top:260.40px;width:162.5px;height:11.4px">
<span class="t" style="left:2.60px;top:1.30px;font-size:7.8px;line-height:10px;color:#161616;font-weight:normal;font-style:normal;transform:scaleX(0.807);transform-origin:0 50%;">Deuter Schmusebär</span>
</div>
<span class="t" style="right:186.70px;top:261.70px;font-size:7.8px;line-height:10px;color:#161616;font-weight:normal;font-style:normal;transform:scaleX(0.8);transform-origin:100% 50%;">11</span>
<span class="t" style="right:134.10px;top:261.70px;font-size:7.8px;line-height:10px;color:#161616;font-weight:normal;font-style:normal;transform:scaleX(0.8);transform-origin:100% 50%;">11</span>
<span class="t" style="left:154.00px;top:273.10px;font-size:7.8px;line-height:10px;color:#161616;font-weight:normal;font-style:normal;transform:scaleX(0.79);transform-origin:0 50%;">ART00007</span>
<div class="clip" style="left:257px;top:271.80px;width:162.5px;height:11.4px">
<span class="t" style="left:2.60px;top:1.30px;font-size:7.8px;line-height:10px;color:#161616;font-weight:normal;font-style:normal;transform:scaleX(0.807);transform-origin:0 50%;">Edelrid Black Bear Seil</span>
</div>
<span class="t" style="right:186.70px;top:273.10px;font-size:7.8px;line-height:10px;color:#161616;font-weight:normal;font-style:normal;transform:scaleX(0.8);transform-origin:100% 50%;">500</span>
<span class="t" style="right:134.10px;top:273.10px;font-size:7.8px;line-height:10px;color:#161616;font-weight:normal;font-style:normal;transform:scaleX(0.8);transform-origin:100% 50%;">500</span>
<div style="left:134px;top:283.20000000000005px;width:486.40px;height:11.40px;background:#dde8fb;"></div>
<span class="t" style="left:154.00px;top:284.50px;font-size:7.8px;line-height:10px;color:#161616;font-weight:normal;font-style:normal;transform:scaleX(0.79);transform-origin:0 50%;">ART00008</span>
<div class="clip" style="left:257px;top:283.20px;width:162.5px;height:11.4px">
<span class="t" style="left:2.60px;top:1.30px;font-size:7.8px;line-height:10px;color:#161616;font-weight:normal;font-style:normal;transform:scaleX(0.807);transform-origin:0 50%;">Mag Lite Mini</span>
</div>
<span class="t" style="right:186.70px;top:284.50px;font-size:7.8px;line-height:10px;color:#161616;font-weight:normal;font-style:normal;transform:scaleX(0.8);transform-origin:100% 50%;">2</span>
<span class="t" style="right:134.10px;top:284.50px;font-size:7.8px;line-height:10px;color:#161616;font-weight:normal;font-style:normal;transform:scaleX(0.8);transform-origin:100% 50%;">2</span>
<span class="t" style="left:154.00px;top:295.90px;font-size:7.8px;line-height:10px;color:#161616;font-weight:normal;font-style:normal;transform:scaleX(0.79);transform-origin:0 50%;">ART00009</span>
<div class="clip" style="left:257px;top:294.60px;width:162.5px;height:11.4px">
<span class="t" style="left:2.60px;top:1.30px;font-size:7.8px;line-height:10px;color:#161616;font-weight:normal;font-style:normal;transform:scaleX(0.807);transform-origin:0 50%;">Grangers Extreme Waterproof</span>
</div>
<span class="t" style="right:186.70px;top:295.90px;font-size:7.8px;line-height:10px;color:#161616;font-weight:normal;font-style:normal;transform:scaleX(0.8);transform-origin:100% 50%;">20</span>
<span class="t" style="right:134.10px;top:295.90px;font-size:7.8px;line-height:10px;color:#161616;font-weight:normal;font-style:normal;transform:scaleX(0.8);transform-origin:100% 50%;">20</span>
<div style="left:134px;top:306.0px;width:486.40px;height:11.40px;background:#dde8fb;"></div>
<span class="t" style="left:154.00px;top:307.30px;font-size:7.8px;line-height:10px;color:#161616;font-weight:normal;font-style:normal;transform:scaleX(0.79);transform-origin:0 50%;">ART00010</span>
<div class="clip" style="left:257px;top:306.00px;width:162.5px;height:11.4px">
<span class="t" style="left:2.60px;top:1.30px;font-size:7.8px;line-height:10px;color:#161616;font-weight:normal;font-style:normal;transform:scaleX(0.807);transform-origin:0 50%;">Grangers Extreme Cleaner</span>
</div>
<span class="t" style="right:186.70px;top:307.30px;font-size:7.8px;line-height:10px;color:#161616;font-weight:normal;font-style:normal;transform:scaleX(0.8);transform-origin:100% 50%;">20</span>
<span class="t" style="right:134.10px;top:307.30px;font-size:7.8px;line-height:10px;color:#161616;font-weight:normal;font-style:normal;transform:scaleX(0.8);transform-origin:100% 50%;">20</span>
<span class="t" style="left:154.00px;top:318.70px;font-size:7.8px;line-height:10px;color:#161616;font-weight:normal;font-style:normal;transform:scaleX(0.79);transform-origin:0 50%;">ART00011</span>
<div class="clip" style="left:257px;top:317.40px;width:162.5px;height:11.4px">
<span class="t" style="left:2.60px;top:1.30px;font-size:7.8px;line-height:10px;color:#161616;font-weight:normal;font-style:normal;transform:scaleX(0.807);transform-origin:0 50%;">Tatonka Vento</span>
</div>
<span class="t" style="right:186.70px;top:318.70px;font-size:7.8px;line-height:10px;color:#161616;font-weight:normal;font-style:normal;transform:scaleX(0.8);transform-origin:100% 50%;">3</span>
<span class="t" style="right:134.10px;top:318.70px;font-size:7.8px;line-height:10px;color:#161616;font-weight:normal;font-style:normal;transform:scaleX(0.8);transform-origin:100% 50%;">3</span>
<div style="left:134px;top:328.8px;width:486.40px;height:11.40px;background:#dde8fb;"></div>
<span class="t" style="left:154.00px;top:330.10px;font-size:7.8px;line-height:10px;color:#161616;font-weight:normal;font-style:normal;transform:scaleX(0.79);transform-origin:0 50%;">ART00012</span>
<div class="clip" style="left:257px;top:328.80px;width:162.5px;height:11.4px">
<span class="t" style="left:2.60px;top:1.30px;font-size:7.8px;line-height:10px;color:#161616;font-weight:normal;font-style:normal;transform:scaleX(0.807);transform-origin:0 50%;">Leatherman Pocket Survival Tool</span>
</div>
<span class="t" style="right:186.70px;top:330.10px;font-size:7.8px;line-height:10px;color:#161616;font-weight:normal;font-style:normal;transform:scaleX(0.8);transform-origin:100% 50%;">51</span>
<span class="t" style="right:134.10px;top:330.10px;font-size:7.8px;line-height:10px;color:#161616;font-weight:normal;font-style:normal;transform:scaleX(0.8);transform-origin:100% 50%;">51</span>
<span class="t" style="left:154.00px;top:341.50px;font-size:7.8px;line-height:10px;color:#161616;font-weight:normal;font-style:normal;transform:scaleX(0.79);transform-origin:0 50%;">ART00013</span>
<div class="clip" style="left:257px;top:340.20px;width:162.5px;height:11.4px">
<span class="t" style="left:2.60px;top:1.30px;font-size:7.8px;line-height:10px;color:#161616;font-weight:normal;font-style:normal;transform:scaleX(0.807);transform-origin:0 50%;">Black Bear Gemini</span>
</div>
<span class="t" style="right:186.70px;top:341.50px;font-size:7.8px;line-height:10px;color:#161616;font-weight:normal;font-style:normal;transform:scaleX(0.8);transform-origin:100% 50%;">10</span>
<span class="t" style="right:134.10px;top:341.50px;font-size:7.8px;line-height:10px;color:#161616;font-weight:normal;font-style:normal;transform:scaleX(0.8);transform-origin:100% 50%;">10</span>
<div style="left:134px;top:351.6px;width:486.40px;height:11.40px;background:#dde8fb;"></div>
<span class="t" style="left:154.00px;top:352.90px;font-size:7.8px;line-height:10px;color:#161616;font-weight:normal;font-style:normal;transform:scaleX(0.79);transform-origin:0 50%;">ART00014</span>
<div class="clip" style="left:257px;top:351.60px;width:162.5px;height:11.4px">
<span class="t" style="left:2.60px;top:1.30px;font-size:7.8px;line-height:10px;color:#161616;font-weight:normal;font-style:normal;transform:scaleX(0.807);transform-origin:0 50%;">Berghaus Padite Jacket - Men</span>
</div>
<span class="t" style="left:154.00px;top:364.30px;font-size:7.8px;line-height:10px;color:#161616;font-weight:normal;font-style:normal;transform:scaleX(0.79);transform-origin:0 50%;">ART00015</span>
<div class="clip" style="left:257px;top:363.00px;width:162.5px;height:11.4px">
<span class="t" style="left:2.60px;top:1.30px;font-size:7.8px;line-height:10px;color:#161616;font-weight:normal;font-style:normal;transform:scaleX(0.807);transform-origin:0 50%;">Berghaus Padite Jacket - Men</span>
</div>
<span class="t" style="right:186.70px;top:364.30px;font-size:7.8px;line-height:10px;color:#161616;font-weight:normal;font-style:normal;transform:scaleX(0.8);transform-origin:100% 50%;">1</span>
<span class="t" style="right:134.10px;top:364.30px;font-size:7.8px;line-height:10px;color:#161616;font-weight:normal;font-style:normal;transform:scaleX(0.8);transform-origin:100% 50%;">1</span>
<div style="left:134px;top:374.4px;width:486.40px;height:11.40px;background:#dde8fb;"></div>
<span class="t" style="left:154.00px;top:375.70px;font-size:7.8px;line-height:10px;color:#161616;font-weight:normal;font-style:normal;transform:scaleX(0.79);transform-origin:0 50%;">ART00016</span>
<div class="clip" style="left:257px;top:374.40px;width:162.5px;height:11.4px">
<span class="t" style="left:2.60px;top:1.30px;font-size:7.8px;line-height:10px;color:#161616;font-weight:normal;font-style:normal;transform:scaleX(0.807);transform-origin:0 50%;">Berghaus Padite Jacket - Men</span>
</div>
<span class="t" style="right:186.70px;top:375.70px;font-size:7.8px;line-height:10px;color:#161616;font-weight:normal;font-style:normal;transform:scaleX(0.8);transform-origin:100% 50%;">4</span>
<span class="t" style="right:134.10px;top:375.70px;font-size:7.8px;line-height:10px;color:#161616;font-weight:normal;font-style:normal;transform:scaleX(0.8);transform-origin:100% 50%;">4</span>
<span class="t" style="left:154.00px;top:387.10px;font-size:7.8px;line-height:10px;color:#161616;font-weight:normal;font-style:normal;transform:scaleX(0.79);transform-origin:0 50%;">ART00017</span>
<div class="clip" style="left:257px;top:385.80px;width:162.5px;height:11.4px">
<span class="t" style="left:2.60px;top:1.30px;font-size:7.8px;line-height:10px;color:#161616;font-weight:normal;font-style:normal;transform:scaleX(0.807);transform-origin:0 50%;">Berghaus Padite Jacket - Men</span>
</div>
<div style="left:134px;top:397.20000000000005px;width:486.40px;height:11.40px;background:#dde8fb;"></div>
<span class="t" style="left:154.00px;top:398.50px;font-size:7.8px;line-height:10px;color:#161616;font-weight:normal;font-style:normal;transform:scaleX(0.79);transform-origin:0 50%;">ART00018</span>
<div class="clip" style="left:257px;top:397.20px;width:162.5px;height:11.4px">
<span class="t" style="left:2.60px;top:1.30px;font-size:7.8px;line-height:10px;color:#161616;font-weight:normal;font-style:normal;transform:scaleX(0.807);transform-origin:0 50%;">Berghaus Padite Jacket - Men</span>
</div>
<span class="t" style="right:186.70px;top:398.50px;font-size:7.8px;line-height:10px;color:#161616;font-weight:normal;font-style:normal;transform:scaleX(0.8);transform-origin:100% 50%;">9</span>
<span class="t" style="right:134.10px;top:398.50px;font-size:7.8px;line-height:10px;color:#161616;font-weight:normal;font-style:normal;transform:scaleX(0.8);transform-origin:100% 50%;">9</span>
<span class="t" style="left:154.00px;top:409.90px;font-size:7.8px;line-height:10px;color:#161616;font-weight:normal;font-style:normal;transform:scaleX(0.79);transform-origin:0 50%;">ART00019</span>
<div class="clip" style="left:257px;top:408.60px;width:162.5px;height:11.4px">
<span class="t" style="left:2.60px;top:1.30px;font-size:7.8px;line-height:10px;color:#161616;font-weight:normal;font-style:normal;transform:scaleX(0.807);transform-origin:0 50%;">Berghaus Padite Jacket - Men</span>
</div>
<span class="t" style="right:186.70px;top:409.90px;font-size:7.8px;line-height:10px;color:#161616;font-weight:normal;font-style:normal;transform:scaleX(0.8);transform-origin:100% 50%;">8</span>
<span class="t" style="right:134.10px;top:409.90px;font-size:7.8px;line-height:10px;color:#161616;font-weight:normal;font-style:normal;transform:scaleX(0.8);transform-origin:100% 50%;">8</span>
<div style="left:134px;top:420.0px;width:486.40px;height:11.40px;background:#dde8fb;"></div>
<span class="t" style="left:154.00px;top:421.30px;font-size:7.8px;line-height:10px;color:#161616;font-weight:normal;font-style:normal;transform:scaleX(0.79);transform-origin:0 50%;">ART00020</span>
<div class="clip" style="left:257px;top:420.00px;width:162.5px;height:11.4px">
<span class="t" style="left:2.60px;top:1.30px;font-size:7.8px;line-height:10px;color:#161616;font-weight:normal;font-style:normal;transform:scaleX(0.807);transform-origin:0 50%;">Berghaus Padite Jacket - Men</span>
</div>
<span class="t" style="right:186.70px;top:421.30px;font-size:7.8px;line-height:10px;color:#161616;font-weight:normal;font-style:normal;transform:scaleX(0.8);transform-origin:100% 50%;">8</span>
<span class="t" style="right:134.10px;top:421.30px;font-size:7.8px;line-height:10px;color:#161616;font-weight:normal;font-style:normal;transform:scaleX(0.8);transform-origin:100% 50%;">8</span>
<span class="t" style="left:154.00px;top:432.70px;font-size:7.8px;line-height:10px;color:#161616;font-weight:normal;font-style:normal;transform:scaleX(0.79);transform-origin:0 50%;">ART00021</span>
<div class="clip" style="left:257px;top:431.40px;width:162.5px;height:11.4px">
<span class="t" style="left:2.60px;top:1.30px;font-size:7.8px;line-height:10px;color:#161616;font-weight:normal;font-style:normal;transform:scaleX(0.807);transform-origin:0 50%;">Berghaus Padite Jacket - Men</span>
</div>
<span class="t" style="right:186.70px;top:432.70px;font-size:7.8px;line-height:10px;color:#161616;font-weight:normal;font-style:normal;transform:scaleX(0.8);transform-origin:100% 50%;">8</span>
<span class="t" style="right:134.10px;top:432.70px;font-size:7.8px;line-height:10px;color:#161616;font-weight:normal;font-style:normal;transform:scaleX(0.8);transform-origin:100% 50%;">8</span>
<div style="left:134px;top:442.80000000000007px;width:486.40px;height:11.40px;background:#dde8fb;"></div>
<span class="t" style="left:154.00px;top:444.10px;font-size:7.8px;line-height:10px;color:#161616;font-weight:normal;font-style:normal;transform:scaleX(0.79);transform-origin:0 50%;">ART00022</span>
<div class="clip" style="left:257px;top:442.80px;width:162.5px;height:11.4px">
<span class="t" style="left:2.60px;top:1.30px;font-size:7.8px;line-height:10px;color:#161616;font-weight:normal;font-style:normal;transform:scaleX(0.807);transform-origin:0 50%;">Berghaus Padite Jacket - Men</span>
</div>
<span class="t" style="right:186.70px;top:444.10px;font-size:7.8px;line-height:10px;color:#161616;font-weight:normal;font-style:normal;transform:scaleX(0.8);transform-origin:100% 50%;">3</span>
<span class="t" style="right:134.10px;top:444.10px;font-size:7.8px;line-height:10px;color:#161616;font-weight:normal;font-style:normal;transform:scaleX(0.8);transform-origin:100% 50%;">3</span>
<span class="t" style="left:154.00px;top:455.50px;font-size:7.8px;line-height:10px;color:#161616;font-weight:normal;font-style:normal;transform:scaleX(0.79);transform-origin:0 50%;">ART00023</span>
<div class="clip" style="left:257px;top:454.20px;width:162.5px;height:11.4px">
<span class="t" style="left:2.60px;top:1.30px;font-size:7.8px;line-height:10px;color:#161616;font-weight:normal;font-style:normal;transform:scaleX(0.807);transform-origin:0 50%;">Berghaus Padite Jacket - Men</span>
</div>
<span class="t" style="right:186.70px;top:455.50px;font-size:7.8px;line-height:10px;color:#161616;font-weight:normal;font-style:normal;transform:scaleX(0.8);transform-origin:100% 50%;">7</span>
<span class="t" style="right:134.10px;top:455.50px;font-size:7.8px;line-height:10px;color:#161616;font-weight:normal;font-style:normal;transform:scaleX(0.8);transform-origin:100% 50%;">7</span>
<div style="left:134px;top:465.6px;width:486.40px;height:11.40px;background:#dde8fb;"></div>
<span class="t" style="left:154.00px;top:466.90px;font-size:7.8px;line-height:10px;color:#161616;font-weight:normal;font-style:normal;transform:scaleX(0.79);transform-origin:0 50%;">ART00024</span>
<div class="clip" style="left:257px;top:465.60px;width:162.5px;height:11.4px">
<span class="t" style="left:2.60px;top:1.30px;font-size:7.8px;line-height:10px;color:#161616;font-weight:normal;font-style:normal;transform:scaleX(0.807);transform-origin:0 50%;">Berghaus Padite Jacket - Men</span>
</div>
<span class="t" style="right:186.70px;top:466.90px;font-size:7.8px;line-height:10px;color:#161616;font-weight:normal;font-style:normal;transform:scaleX(0.8);transform-origin:100% 50%;">7</span>
<span class="t" style="right:134.10px;top:466.90px;font-size:7.8px;line-height:10px;color:#161616;font-weight:normal;font-style:normal;transform:scaleX(0.8);transform-origin:100% 50%;">7</span>
<span class="t" style="left:154.00px;top:478.30px;font-size:7.8px;line-height:10px;color:#161616;font-weight:normal;font-style:normal;transform:scaleX(0.79);transform-origin:0 50%;">ART00025</span>
<div class="clip" style="left:257px;top:477.00px;width:162.5px;height:11.4px">
<span class="t" style="left:2.60px;top:1.30px;font-size:7.8px;line-height:10px;color:#161616;font-weight:normal;font-style:normal;transform:scaleX(0.807);transform-origin:0 50%;">Berghaus Padite Jacket - Women</span>
</div>
<div style="left:134px;top:488.4px;width:486.40px;height:11.40px;background:#dde8fb;"></div>
<span class="t" style="left:154.00px;top:489.70px;font-size:7.8px;line-height:10px;color:#161616;font-weight:normal;font-style:normal;transform:scaleX(0.79);transform-origin:0 50%;">ART00026</span>
<div class="clip" style="left:257px;top:488.40px;width:162.5px;height:11.4px">
<span class="t" style="left:2.60px;top:1.30px;font-size:7.8px;line-height:10px;color:#161616;font-weight:normal;font-style:normal;transform:scaleX(0.807);transform-origin:0 50%;">Berghaus Padite Jacket - Women</span>
</div>
<span class="t" style="right:186.70px;top:489.70px;font-size:7.8px;line-height:10px;color:#161616;font-weight:normal;font-style:normal;transform:scaleX(0.8);transform-origin:100% 50%;">1</span>
<span class="t" style="right:134.10px;top:489.70px;font-size:7.8px;line-height:10px;color:#161616;font-weight:normal;font-style:normal;transform:scaleX(0.8);transform-origin:100% 50%;">1</span>
<div style="left:151.1px;top:89.4px;width:1.00px;height:410.40px;background:#e6ecf7;"></div>
<div style="left:256.4px;top:89.4px;width:1.00px;height:410.40px;background:#dfe7f5;"></div>
<div style="left:419.5px;top:89.4px;width:1.00px;height:410.40px;background:#dfe7f5;"></div>
<div style="left:472.5px;top:89.4px;width:1.00px;height:410.40px;background:#dfe7f5;"></div>
<div style="left:525.3px;top:89.4px;width:1.00px;height:410.40px;background:#dfe7f5;"></div>
<div style="left:578.3px;top:89.4px;width:1.00px;height:410.40px;background:#dfe7f5;"></div>
<div style="left:151.1px;top:89.4px;width:1.00px;height:11.40px;background:#7f9ee0;"></div>
<div style="left:256.4px;top:89.4px;width:1.00px;height:11.40px;background:#7f9ee0;"></div>
<div style="left:419.5px;top:89.4px;width:1.00px;height:11.40px;background:#7f9ee0;"></div>
<div style="left:472.5px;top:89.4px;width:1.00px;height:11.40px;background:#7f9ee0;"></div>
<div style="left:525.3px;top:89.4px;width:1.00px;height:11.40px;background:#7f9ee0;"></div>
<div style="left:578.3px;top:89.4px;width:1.00px;height:11.40px;background:#7f9ee0;"></div>
<div style="left:152.2px;top:89.4px;width:104px;height:1px;border-top:1px dashed #c8d8f8;"></div>
<div style="left:134px;top:499.8px;width:496.50px;height:5.20px;background:#ffffff;"></div>
<div style="left:134px;top:505.0px;width:496.50px;height:26.30px;background:#f6f5ef;"></div>
<div style="left:620.4px;top:89.3px;width:10.10px;height:416.50px;background:#f8fafe;"></div>
<svg style="position:absolute;left:623px;top:91.6px" width="5.4" height="5.4" viewBox="0 0 5.4 5.4"><path d="M0.4 0.8H5" stroke="#5b7bbf" stroke-width="0.9"/><path d="M0 5.2L2.7 2.4L5.4 5.2z" fill="#5b7bbf"/></svg>
<svg style="position:absolute;left:623.2px;top:101.6px" width="5" height="4.6" viewBox="0 0 5 4.6"><path d="M0 2.3L2.5 0L5 2.3L2.5 4.6z" fill="#5b7bbf"/></svg>
<svg style="position:absolute;left:623px;top:110.8px" width="5.2" height="3.2" viewBox="0 0 5.2 3.2"><path d="M0 3.2L2.6 0.2L5.2 3.2z" fill="#5b7bbf"/></svg>
<svg style="position:absolute;left:623.2px;top:482.5px" width="5.2" height="3.2" viewBox="0 0 5.2 3.2"><path d="M0 0L2.6 3L5.2 0z" fill="#5b7bbf"/></svg>
<svg style="position:absolute;left:623.2px;top:490.9px" width="5" height="4.4" viewBox="0 0 5 4.4"><path d="M0 2.2L2.5 0L5 2.2L2.5 4.4z" fill="#5b7bbf"/></svg>
<svg style="position:absolute;left:623px;top:499.7px" width="5.4" height="5.4" viewBox="0 0 5.4 5.4"><path d="M0 0L2.7 2.8L5.4 0z" fill="#5b7bbf"/><path d="M0.4 4.7H5" stroke="#5b7bbf" stroke-width="0.9"/></svg>
<svg style="position:absolute;left:621.6px;top:256.4px" width="8" height="9.2" viewBox="0 0 8 9.2"><rect x="0.5" y="0.5" width="6.4" height="4.4" fill="#dfe6f3" stroke="#6e7fa2" stroke-width="0.9"/><path d="M3.7 0.5v4.4" stroke="#6e7fa2" stroke-width="0.9"/></svg>
<svg style="position:absolute;left:621.6px;top:267.8px" width="8" height="9.2" viewBox="0 0 8 9.2"><rect x="0.6" y="0.5" width="4.6" height="4.4" fill="#f2f5fa" stroke="#7382a4" stroke-width="0.9"/><path d="M4.6 4.4L7.2 7.2" stroke="#7382a4" stroke-width="1.1"/></svg>
<svg style="position:absolute;left:621.6px;top:282.6px" width="8" height="9.2" viewBox="0 0 8 9.2"><rect x="0.5" y="0.8" width="6.6" height="4" fill="#c9d6ee" stroke="#7d8fb4" stroke-width="0.8"/><path d="M2.2 0.8v2.2h3.2v-2.2" fill="none" stroke="#5f72a0" stroke-width="0.8"/></svg>
<svg style="position:absolute;left:621.6px;top:295.8px" width="8" height="9.2" viewBox="0 0 8 9.2"><path d="M0 0.5h4.6" stroke="#5a6a8c" stroke-width="1"/><path d="M1.4 2h5.8l-2.4 2.6v2.6l-1-0.6v-2z" fill="#c9d6ee" stroke="#7d8fb4" stroke-width="0.7"/></svg>
<svg style="position:absolute;left:621.6px;top:308.2px" width="8" height="9.2" viewBox="0 0 8 9.2"><rect x="0.5" y="0.5" width="5" height="5.6" fill="#e6ecf6" stroke="#7d8fb4" stroke-width="0.8"/><path d="M3 5.6L7.4 1.8" stroke="#6a7ca4" stroke-width="1"/><path d="M1.5 6.4h5" stroke="#7d8fb4" stroke-width="0.8"/></svg>
<svg style="position:absolute;left:621.6px;top:320.3px" width="8" height="9.2" viewBox="0 0 8 9.2"><rect x="0.4" y="0.4" width="7.2" height="8.4" fill="#c6d2ea" stroke="#8496bc" stroke-width="0.8"/><path d="M2 3.2h4M2 5.6h4" stroke="#f2f5fb" stroke-width="1"/></svg>
<svg style="position:absolute;left:621.6px;top:333.4px" width="8" height="9.2" viewBox="0 0 8 9.2"><rect x="0.4" y="0.4" width="7.2" height="7.8" fill="#c6d2ea" stroke="#8496bc" stroke-width="0.8"/><path d="M2 3h4M2 5.4h4" stroke="#f2f5fb" stroke-width="1"/></svg>
<div style="left:622.5px;top:265.2px;width:6.50px;height:0.70px;background:#e2e6ee;"></div>
<div style="left:622.5px;top:278.4px;width:6.50px;height:0.70px;background:#e2e6ee;"></div>
<div style="left:622.5px;top:290.8px;width:6.50px;height:0.70px;background:#e2e6ee;"></div>
<div style="left:622.5px;top:304.9px;width:6.50px;height:0.70px;background:#e2e6ee;"></div>
<div style="left:622.5px;top:318.2px;width:6.50px;height:0.70px;background:#e2e6ee;"></div>
<div style="left:622.5px;top:331.6px;width:6.50px;height:0.70px;background:#e2e6ee;"></div>
<div style="left:630.0px;top:66.0px;width:1.60px;height:465.60px;background:#a9b4cf;"></div>
<div class="btn" style="left:137.2px;top:510.9px;width:47.0px;height:14.2px;"></div>
<span class="t" style="left:144.00px;top:513.40px;font-size:7.8px;line-height:10px;color:#161616;font-weight:normal;font-style:normal;transform:scaleX(0.83);transform-origin:0 50%;">+ <u>M</u>arkieren</span>
<div class="btn" style="left:186.6px;top:510.9px;width:54.0px;height:14.2px;"></div>
<span class="t" style="left:192.80px;top:513.40px;font-size:7.8px;line-height:10px;color:#161616;font-weight:normal;font-style:normal;transform:scaleX(0.808);transform-origin:0 50%;">- <u>E</u>ntmarkieren</span>
<div class="btn" style="left:243.0px;top:510.9px;width:61.4px;height:14.2px;"></div>
<span class="t" style="left:249.20px;top:513.40px;font-size:7.8px;line-height:10px;color:#161616;font-weight:normal;font-style:normal;transform:scaleX(0.812);transform-origin:0 50%;"><u>S</u>tammdaten (F3)</span>
<div class="btn" style="left:307.3px;top:510.9px;width:49.2px;height:14.2px;"></div>
<span class="t" style="left:312.80px;top:513.40px;font-size:7.8px;line-height:10px;color:#161616;font-weight:normal;font-style:normal;transform:scaleX(0.818);transform-origin:0 50%;"><u>D</u>rucken (F4)</span>
<div class="btn" style="left:359.1px;top:510.9px;width:72.5px;height:14.2px;"></div>
<span class="t" style="left:364.30px;top:513.40px;font-size:7.8px;line-height:10px;color:#161616;font-weight:normal;font-style:normal;transform:scaleX(0.851);transform-origin:0 50%;">Aus<u>w</u>ertung (Return)</span>
</div>
</body></html>
